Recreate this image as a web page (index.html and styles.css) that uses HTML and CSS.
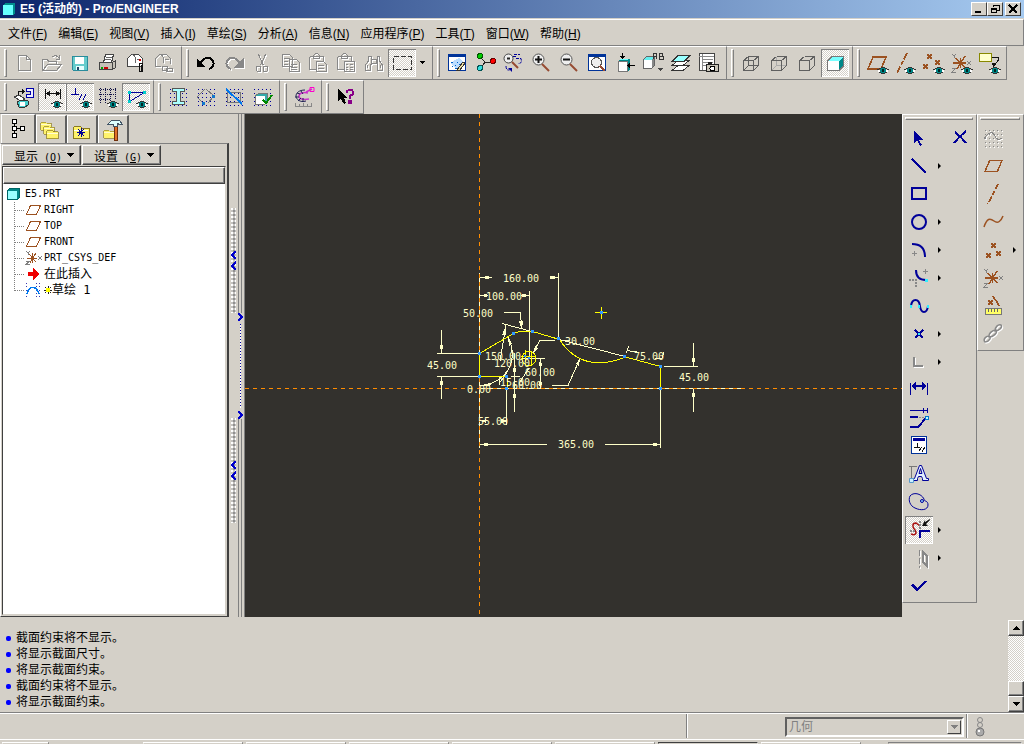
FILE: index.html
```html
<!DOCTYPE html>
<html lang="zh-CN">
<head>
    <meta charset="UTF-8">
    <meta name="viewport" content="width=device-width, initial-scale=1.0">
    <title>E5 (活动的) - Pro/ENGINEER</title>
    <link rel="stylesheet" href="styles.css">
</head>
<body>
    <!-- Shared icon parts -->
    <svg class="defs" width="0" height="0" aria-hidden="true">
        <symbol id="eye" viewBox="0 0 12 7">
            <path d="M1 3h2v2H1zM9 3h2v2H9z" fill="#fff"/>
            <path d="M0 2.500h2M2 1.500h2M4 .5h4M8 1.500h2M10 2.500h2M2 5.500h2M4 6.500h4M8 5.500h2" fill="none" stroke="#333"/>
            <path d="M3 2h6v3H3zM4 1h4v5H4z" fill="#088"/>
            <path d="M5 2h2v3H5z" fill="#022"/>
        </symbol>
        <symbol id="plane" viewBox="0 0 20 14">
            <path d="M6 1h13l-5 12H1z" fill="none" stroke="#9c5221" stroke-width="1.500"/>
        </symbol>
        <symbol id="cross" viewBox="0 0 6 6">
            <path d="M0 0l6 6M6 0L0 6" fill="none" stroke="#9c5221" stroke-width="2"/>
        </symbol>
        <symbol id="csys" viewBox="0 0 20 20">
            <path d="M2 10h13M5 5l9 10M14 3L6 16M9.500 5v10" fill="none" stroke="#9c5221" stroke-width="1.500"/>
            <path d="M1 1l2 2 2-2M3 3v2M16 8l4 4M20 8l-4 4M1 15h4l-4 4h4" fill="none" stroke="#808080"/>
        </symbol>
        <symbol id="grid" viewBox="0 0 18 18">
            <path d="M.5 1h17M.5 5h17M.5 9h17M.5 13h17M.5 17h17" fill="none" stroke="currentColor" stroke-dasharray="1 3"/>
        </symbol>
        <symbol id="folder" viewBox="0 0 18 14">
            <path d="M1 3l2-2h5l2 2h7v10H1z" fill="#fff36b" stroke="#8a7a20"/>
            <path d="M2 5h14" stroke="#fff"/>
        </symbol>
    </svg>

    <div class="window">
        <header class="titlebar">
            <svg class="app-icon" width="14" height="14" viewBox="0 0 14 14"><path d="M1 3l2-2h10v10l-2 2H1z" fill="#008c8c"/><path d="M1 3h10v10H1z" fill="#6ff"/></svg>
            <h1>E5 (活动的) - Pro/ENGINEER</h1>
            <div class="window-buttons">
                <button aria-label="最小化"><svg width="12" height="10"><path d="M2 8h6" stroke="#000" stroke-width="2"/></svg></button>
                <button aria-label="还原"><svg width="12" height="10"><path d="M4.500 3V1.500h6v5H8M4 1.500h7M2.500 4.500h5v4h-5zM2 5h6" fill="none" stroke="#000"/></svg></button>
                <button class="close" aria-label="关闭"><svg width="12" height="10"><path d="M2 1l8 8M10 1L2 9" stroke="#000" stroke-width="2"/></svg></button>
            </div>
        </header>

        <nav class="menubar">
            <a href="#">文件(<u>F</u>)</a>
            <a href="#">编辑(<u>E</u>)</a>
            <a href="#">视图(<u>V</u>)</a>
            <a href="#">插入(<u>I</u>)</a>
            <a href="#">草绘(<u>S</u>)</a>
            <a href="#">分析(<u>A</u>)</a>
            <a href="#">信息(<u>N</u>)</a>
            <a href="#">应用程序(<u>P</u>)</a>
            <a href="#">工具(<u>T</u>)</a>
            <a href="#">窗口(<u>W</u>)</a>
            <a href="#">帮助(<u>H</u>)</a>
        </nav>

        <div class="toolbar-row">
            <div class="toolbar">
                <button class="tool off" aria-label="新建"><svg><path d="M8.500 6.500h8l4 4v11h-12zM16.500 6.500v4h4"/></svg></button>
                <button class="tool off" aria-label="打开"><svg><path d="M4.500 21.500v-11h5l1 2h8v3M4.500 21.500l5-6h14l-5 6zM13.500 8.500c3-3 6-2 8 1M21.500 6v4h-4"/></svg></button>
                <button class="tool" aria-label="保存"><svg><path d="M6.500 7.500h15v14h-14l-1-1z" fill="#6cc" stroke="#2a8c9c"/><path d="M9 8h9v7H9z" fill="#fff"/><path d="M10 17h8v4h-8z" fill="#e8ffff"/><path d="M11 18h2v3h-2z" fill="#246"/></svg></button>
                <button class="tool" aria-label="打印"><svg><path d="M9.500 13.500l2-8h8l-2 8z" fill="#fff" stroke="#444"/><path d="M12 8h6M11 10h6" stroke="#666"/><path d="M5.500 13.500h13v7h-13zM18.500 13.500l3-2v7l-3 2" fill="#c6c2b8" stroke="#444"/><path d="M7 19h2" stroke="#0a0" stroke-width="2"/><path d="M10 19h4" stroke="#c00" stroke-width="2"/></svg></button>
                <button class="tool" aria-label="附件发送"><svg><path d="M5.500 17.500v-8l4-4h7l4 4v8z" fill="#fff" stroke="#444"/><path d="M10 5.500c4 1 4 4 4 8M15 10h4" stroke="#666"/><path d="M17 11h2" stroke="#c00" stroke-width="2"/><path d="M17.500 22v-8h3v7h-1v-5M17.500 20v2h3" stroke="#111"/></svg></button>
                <button class="tool off" aria-label="链接发送"><svg><path d="M5.500 17.500v-8l4-4h7l4 4v5M5.500 17.500h5M10 5.500c4 1 4 4 4 8M15 10h4M12.500 17.500h5v4h-5zM16.500 19.500h6v3h-6z"/></svg></button>
            </div>
            <div class="toolbar">
                <button class="tool" aria-label="撤消"><svg><path d="M8 15c3-7 10-8 13-3 2 4-1 7-4 8" stroke="#000" stroke-width="2"/><path d="M5 10v8h8z" fill="#000"/></svg></button>
                <button class="tool off" aria-label="重做"><svg><path d="M20 15c-3-7-10-8-13-3-2 4 1 7 4 8" stroke-width="2"/><path d="M23 10v8h-8z" class="solid"/></svg></button>
                <button class="tool off" aria-label="剪切"><svg><path d="M10.500 5.500l5 11M17.500 5.500l-5 11M8.500 17.500h4v5h-3l-1-1zM15.500 17.500h4v4l-1 1h-3z"/></svg></button>
                <button class="tool off" aria-label="复制"><svg><path d="M6.500 5.500h7l3 3v9h-10zM13.500 10.500h7l3 3v9h-10zM8 9h6M8 12h4M8 15h4M15 15h6M15 18h6M15 20h6"/></svg></button>
                <button class="tool off" aria-label="粘贴"><svg><path d="M5.500 7.500h14v5M5.500 7.500v13h7M9.500 9.500v-3l2-2h2l2 2v3zM12.500 12.500h7l3 3v7h-10zM14 16h6M14 19h6"/></svg></button>
                <button class="tool off" aria-label="选择性粘贴"><svg><path d="M5.500 7.500h14v5M5.500 7.500v13h7M9.500 9.500v-3l2-2h2l2 2v3zM12.500 12.500h10v10h-10zM14 15.500h2M18 15.500h3M14 18.500h2M18 18.500h3M14 20.500h2M18 20.500h3"/></svg></button>
                <button class="tool off" aria-label="查找"><svg><path d="M8.500 7v5l-3 4v5h5v-6h1M9 7h2v8M19.500 7v5l3 4v5h-5v-6h-1M19 7h-2v8M11.500 10.500h5v4h-5zM7 16v3M20 16v3"/></svg></button>
                <button class="tool pressed" aria-label="框选"><svg><path d="M5.500 7.500h18v13h-18z" stroke="#333" stroke-dasharray="5 2"/></svg></button>
                <button class="drop" aria-label="选择选项"><svg width="6" height="4"><path d="M0 0h6L3 3z"/></svg></button>
            </div>
            <div class="toolbar">
                <button class="tool" aria-label="重画"><svg><path d="M5.500 5.500h17v16h-17z" fill="#fff" stroke="#039"/><path d="M5 6h18" stroke="#039" stroke-width="3"/><path d="M7 14l9-5 6 5-7 7z" fill="#bdf"/><path d="M8 13h2M12 16h1M9 17h1M14 13h1M12 19h2M16 15h1" stroke="#06c"/><path d="M14 21l6-8 2 1-5 7z" fill="#efe0a0" stroke="#333"/></svg></button>
                <button class="tool" aria-label="旋转中心"><svg><path d="M9 8l5 5h8M14 13l-4 6" stroke="#222"/><circle cx="9" cy="7" r="2.500" fill="#0c0" stroke="#050"/><circle cx="22" cy="12" r="2.500" fill="#f00" stroke="#600"/><circle cx="9" cy="19" r="2.500" fill="#3dd" stroke="#055"/></svg></button>
                <button class="tool" aria-label="定向模式"><svg class="round"><circle cx="9.500" cy="9.500" r="4.500" fill="#eee" stroke="#444"/><path d="M8 9.500h3" stroke="#222" stroke-width="2"/><path d="M13 13l6 6" stroke="#964b32" stroke-width="2"/><path d="M15 5.500h6M17 9.500h5c1 4 0 5-3 5M14 7.500h3M7 17c0 4 2 5 5 3" stroke="#009" stroke-dasharray="3 1"/><path d="M9 19h4v4z" fill="#009"/></svg></button>
                <button class="tool" aria-label="放大"><svg class="round"><circle cx="11.500" cy="10.500" r="5.500" fill="#eee" stroke="#555"/><path d="M8 10.500h7M11.500 7v7" stroke="#111" stroke-width="2"/><path d="M15 15l7 7" stroke="#964b32" stroke-width="2"/></svg></button>
                <button class="tool" aria-label="缩小"><svg class="round"><circle cx="11.500" cy="10.500" r="5.500" fill="#eee" stroke="#555"/><path d="M8 10.500h7" stroke="#111" stroke-width="2"/><path d="M15 15l7 7" stroke="#964b32" stroke-width="2"/></svg></button>
                <button class="tool" aria-label="重新调整"><svg><path d="M5.500 5.500h17v16h-17z" fill="#fff" stroke="#039"/><path d="M5 6h18" stroke="#039" stroke-width="3"/><circle cx="13.500" cy="13.500" r="5" fill="#eee" stroke="#555"/><path d="M17 17l5 5" stroke="#964b32" stroke-width="2"/></svg></button>
                <button class="tool" aria-label="重定向"><svg><path d="M7 12l3-2h9v10l-2 2H7z" fill="#088"/><path d="M7 12h9v10H7z" fill="#fff" stroke="#777"/><path d="M8 11l2-1h8l-2 1z" fill="#6ff"/><path d="M11.500 4v5M18 16.500h6" stroke="#000"/><path d="M9 7h5l-2.500 3zM19 14v5l-3-2.500z" fill="#000"/></svg></button>
                <button class="tool" aria-label="保存的视图"><svg><path d="M4.500 10.500l3-3h8v9l-3 3h-8z" fill="#888" stroke="#666"/><path d="M5 11h8v8H5z" fill="#fff"/><path d="M7 8h8l-2 3H5z" fill="#6ee"/><path d="M19 19h5l-2.500 3z" fill="#444"/><path d="M14.500 10V5l1-1h1l1 1v5M14 7.500h4M20.500 4.500h3v3h-3zM20.500 7.500h4v3h-4z" stroke="#333"/></svg></button>
                <button class="tool" aria-label="层"><svg><path d="M5 21.500h11l6-5H11zM5 16.500h11l6-5H11z" fill="#fff" stroke="#333"/><path d="M5 12.500h12l6-6H11z" fill="#9ff" stroke="#333"/></svg></button>
                <button class="tool" aria-label="视图管理器"><svg><path d="M4.500 4.500h15v17h-15z" fill="#fff" stroke="#444"/><path d="M4 7.500h15M7 10.500h11M7 13.500h11M7 16.500h4M7.500 5v16" stroke="#888"/><path d="M11.500 15.500h12v7h-12z" fill="#c8c4b8" stroke="#222"/><circle cx="17.500" cy="19.500" r="2.500" fill="#fff" stroke="#000"/><path d="M13 14h4" stroke="#222" stroke-width="2"/></svg></button>
            </div>
            <div class="toolbar">
                <button class="tool" aria-label="线框"><svg class="wire"><path d="M6.500 11.500h10v10h-10zM11.500 7.500h10v9h-10zM6.500 11.500l5-4M16.500 11.500l5-4M16.500 21.500l5-5M6.500 21.500l5-5"/></svg></button>
                <button class="tool" aria-label="隐藏线"><svg class="wire"><path d="M11.500 7.500v9h10M6.500 21.500l5-5" stroke="#aaa"/><path d="M6.500 11.500h10v10h-10zM11.500 7.500h10v9M6.500 11.500l5-4M16.500 11.500l5-4M16.500 21.500l5-5"/></svg></button>
                <button class="tool" aria-label="无隐藏线"><svg class="wire"><path d="M6.500 11.500h10v10h-10zM11.500 7.500h10v9M6.500 11.500l5-4M16.500 11.500l5-4M16.500 21.500l5-5"/></svg></button>
                <button class="tool pressed" aria-label="着色"><svg><path d="M6 12l5-5h12v10l-5 5H6z" fill="#088"/><path d="M6 12l5-5h12l-5 5z" fill="#7ff"/><path d="M6 12h12v10H6z" fill="#fff"/><path d="M6.500 12v9.500H18l4.500-4.500V7.500H11z" stroke="#777"/></svg></button>
            </div>
            <div class="toolbar">
                <button class="tool" aria-label="基准平面显示"><svg><use href="#plane" x="4" y="7" width="20" height="14"/><use href="#eye" x="14" y="18" width="12" height="7"/></svg></button>
                <button class="tool" aria-label="基准轴显示"><svg><path d="M16 4L6 24" stroke="#9c5221" stroke-width="2" stroke-dasharray="7 2 4 2"/><use href="#eye" x="13" y="18" width="12" height="7"/></svg></button>
                <button class="tool" aria-label="基准点显示"><svg><use href="#cross" x="8" y="5" width="5" height="5"/><use href="#cross" x="16" y="11" width="5" height="5"/><use href="#cross" x="4" y="15" width="5" height="5"/><use href="#eye" x="14" y="18" width="12" height="7"/></svg></button>
                <button class="tool" aria-label="坐标系显示"><svg><use href="#csys" x="4" y="4" width="20" height="20"/><use href="#eye" x="14" y="18" width="12" height="7"/></svg></button>
                <button class="tool" aria-label="注释显示"><svg><path d="M4.500 4.500h12v8h-12z" fill="#ffc" stroke="#880"/><path d="M17 8.500h6v3l-4 5" stroke="#111"/><path d="M17 14l5 1-4 3z" fill="#111"/><use href="#eye" x="14" y="18" width="12" height="7"/></svg></button>
            </div>
        </div>

        <div class="toolbar-row">
            <div class="toolbar">
                <button class="tool" aria-label="草绘方向"><svg><path d="M8.500 13V8.500H13" stroke="#111"/><path d="M12 5l3 3.500-3 3.500z" fill="#111"/><path d="M16 5.500h7v9h-7v-3h4v-3h-4z" fill="#eef" stroke="#00a"/><path d="M4 14l5-2 6 4-4 2z" fill="#fff" stroke="#444"/><path d="M7 19l4-2 7 1v4l-3 2H9z" fill="#4cc" stroke="#333"/><path d="M10 19h5v4h-5z" fill="#fff"/></svg></button>
                <button class="tool pressed" aria-label="显示尺寸"><svg><path d="M7.500 6v10M22.500 6v10M8 10.500h14" stroke="#111"/><path d="M8 10.500l4-3v6zM22 10.500l-4-3v6z" fill="#111"/><use href="#eye" x="13" y="18" width="12" height="7"/></svg></button>
                <button class="tool pressed" aria-label="显示约束"><svg><path d="M5 11.500h8M9.500 5v7M13 17l3-6M17 17l3-6" stroke="#009"/><use href="#eye" x="14" y="18" width="12" height="7"/></svg></button>
                <button class="tool" aria-label="显示网格"><svg><path d="M6.500 5v15M11.500 5v15M16.500 5v15M21.500 5v12M5 6.500h18M5 11.500h18M5 16.500h12" stroke="#114" stroke-dasharray="1 1"/><use href="#eye" x="13" y="18" width="12" height="7"/></svg></button>
                <button class="tool pressed" aria-label="显示顶点"><svg><path d="M7.500 18V9.500h15l-15 9" stroke="#009"/><path d="M6 8h3v3H6zM21 8h3v3h-3zM6 17h3v3H6z" fill="#0cc"/><use href="#eye" x="14" y="18" width="12" height="7"/></svg></button>
            </div>
            <div class="toolbar">
                <button class="tool" aria-label="着色封闭环"><svg class="dots"><use href="#grid" x="5" y="5" width="18" height="18"/><path d="M8.500 5.500h12v3h-4v10h4v3h-12v-3h4v-10h-4z" fill="#aff" stroke="#555"/></svg></button>
                <button class="tool" aria-label="加亮开放端"><svg class="dots"><use href="#grid" x="5" y="5" width="18" height="18"/><path d="M14 6l8 7-6 7M5 14l8-8M5 14l5 5" stroke="#777"/><path d="M10 19h3v3h-3zM20 12h3v3h-3z" fill="#17c"/></svg></button>
                <button class="tool" aria-label="重叠几何"><svg class="dots"><use href="#grid" x="5" y="5" width="18" height="18"/><path d="M7.500 9.500h13v10h-13z" stroke="#777"/><path d="M6 6l16 15" stroke="#07e" stroke-width="2"/></svg></button>
                <button class="tool" aria-label="特征要求"><svg class="dots"><use href="#grid" x="5" y="5" width="18" height="18"/><path d="M7.500 12.500l3-2h9v9l-3 2h-9z" fill="#3aa" stroke="#777"/><path d="M8 13h9v8H8z" fill="#fff"/><path d="M15 17l3 3 6-8" stroke="#080" stroke-width="2"/></svg></button>
            </div>
            <div class="toolbar">
                <button class="tool" aria-label="曲率分析"><svg class="round"><path d="M18 10c-5-1-9 0-9 3s4 4 10 3M16 9l6-3" stroke="#c3c" stroke-width="1.500"/><path d="M15 7c-6 0-9 3-9 6s4 7 10 5M7 10l3 1M5 14h4M8 18l3-3M11 8l2 3M13 19v-4" stroke="#225"/><path d="M20 4.500h4v4h-4z" stroke="#f0c"/><path d="M5 23.500h17M5.500 20v3M9.500 21v2M13.500 20v3M17.500 21v2M21.500 20v3" stroke="#888"/></svg></button>
            </div>
            <div class="toolbar">
                <button class="tool" aria-label="上下文帮助"><svg><path d="M6 6v12l3-2 3 5 2-1-2-5h3z" fill="#000"/><path d="M15 10V8l2-1h3l1 2v2l-3 2v3M17 18h2v2h-2z" stroke="#808" stroke-width="2"/></svg></button>
            </div>
        </div>

        <main class="workspace">
            <aside class="navigator">
                <div class="tabs">
                    <button class="tab active" aria-label="模型树"><svg width="28" height="26"><path d="M8.500 3.500h4v4h-4zM8.500 10.500h4v4h-4zM8.500 17.500h4v4h-4zM16.500 10.500h4v4h-4z" fill="#fff" stroke="#000"/><path d="M10.500 8v2M10.500 15v2M13 12.500h3" stroke="#000"/></svg></button>
                    <button class="tab" aria-label="文件夹浏览器"><svg width="28" height="26"><use href="#folder" x="3" y="4" width="12" height="10"/><use href="#folder" x="6" y="8" width="12" height="10"/><use href="#folder" x="9" y="12" width="13" height="11"/></svg></button>
                    <button class="tab" aria-label="收藏夹"><svg width="28" height="26"><use href="#folder" x="4" y="8" width="18" height="14"/><path d="M13 11v9M9 15.500h8M10 12l6 7M16 12l-6 7" stroke="#009"/></svg></button>
                    <button class="tab" aria-label="连接"><svg width="28" height="26"><use href="#folder" x="4" y="12" width="12" height="10"/><path d="M15.500 9.500h3v14h-3z" fill="#e07028" stroke="#70300c"/><path d="M8.500 7.500l4-4h8l3 4h-3l-2-1v3h-4v-2z" fill="#dff" stroke="#456"/></svg></button>
                </div>
                <div class="nav-panel">
                    <div class="nav-buttons">
                        <button><span><span class="cjk">显示</span> (<u>O</u>)</span><svg width="8" height="4"><path d="M0 0h8L4 4z"/></svg></button>
                        <button><span><span class="cjk">设置</span> (<u>G</u>)</span><svg width="8" height="4"><path d="M0 0h8L4 4z"/></svg></button>
                    </div>
                    <div class="tree-box">
                        <div class="tree-head"></div>
                        <div class="tree">
                            <p><svg width="18" height="16"><path d="M1.500 4.500l2-2h10v9l-2 2h-10z" fill="#088" stroke="#066"/><path d="M2 5h9v8H2z" fill="#9ff"/></svg>E5.PRT</p>
                            <ul>
                                <li><svg width="18" height="16"><path d="M5.500 3.500h10l-4 9h-10z" class="brown"/></svg>RIGHT</li>
                                <li><svg width="18" height="16"><path d="M5.500 3.500h10l-4 9h-10z" class="brown"/></svg>TOP</li>
                                <li><svg width="18" height="16"><path d="M5.500 3.500h10l-4 9h-10z" class="brown"/></svg>FRONT</li>
                                <li><svg width="18" height="16"><path d="M2 8h10M4 4l7 8M11 3l-6 10M7.500 3v10" class="brown"/><path d="M1 1l2 2 2-2M3 3v2M13 6l4 4M17 6l-4 4M1 11.500h3l-3 3h4" class="label"/></svg>PRT_CSYS_DEF</li>
                                <li><svg width="18" height="16"><path d="M3 6h5V2l6 6-6 6v-4H3z" fill="#e00"/></svg><span class="cjk">在此插入</span></li>
                                <li><svg width="18" height="16" class="navy"><use href="#grid" x="1" y="1" width="14" height="14"/><path d="M2 12c2-9 9-9 12 0" stroke="#07e" stroke-width="1.500" fill="none"/></svg><svg width="8" height="16"><path d="M1 5l6 6M7 5l-6 6M4 4v8M0 8h8" stroke="#222"/><path d="M2 6h4v4H2z" fill="#ff0"/></svg><span class="cjk">草绘 1</span></li>
                            </ul>
                        </div>
                    </div>
                </div>
            </aside>

            <div class="splitter">
                <div class="grips">
                    <button class="grip" aria-label="折叠导航器"><svg width="5" height="19"><path d="M5 0L1 4l4 4M5 11l-4 4 4 4"/></svg></button>
                    <button class="grip" aria-label="折叠导航器下部"><svg width="5" height="19"><path d="M5 0L1 4l4 4M5 11l-4 4 4 4"/></svg></button>
                </div>
                <div class="rail">
                    <button class="expander" aria-label="展开浏览器">
                        <svg width="5" height="8"><path d="M0 0l4 4-4 4"/></svg>
                        <svg width="5" height="8"><path d="M0 0l4 4-4 4"/></svg>
                    </button>
                </div>
            </div>

            <!-- Sketch drawing area -->
            <section class="canvas">
                <svg class="sketch" role="img" aria-label="草绘">
                    <g transform="translate(-245 -114)">
                        <g class="dim">
                            <path d="M479.500 273V448M480 388.500H743"/>
                            <!-- 160.00 and 100.00 -->
                            <path d="M480 277.500h12M550 277.500h9M558.500 273v66M480 295.500h8M521 295.500h8M529.500 291v68"/>
                            <path class="tip" d="M480 277.500l9-2v4zM559 277.500l-9-2v4zM480 295.500l7-2v4zM529 295.500l-7-2v4z"/>
                            <!-- 50.00 leader -->
                            <path d="M504 312.500h16l2 15M502 323.500l30 8"/>
                            <path class="tip" d="M522 330l-3-9h4z"/>
                            <!-- left 45.00 -->
                            <path d="M441.500 330v23M437 353.500h41M437 376.500h41M441.500 377v22"/>
                            <path class="tip" d="M441.500 353l-2-8h4zM441.500 377l-2 8h4z"/>
                            <!-- right 45.00 -->
                            <path d="M664 366.500h34M693.500 343v23M693.500 388v24"/>
                            <path class="tip" d="M693.500 366l-2-8h4zM693.500 389l-2 8h4z"/>
                            <!-- 365.00 -->
                            <path d="M480 444.500h67M605 444.500h56M660.500 388v60M506.500 388v37"/>
                            <path class="tip" d="M480 444.500l8-2v4zM661 444.500l-8-2v4zM480 421l6-2v4zM507 421l-6-2v4z"/>
                            <!-- arcs and radii around the hub -->
                            <path d="M559 339.500l66 17M570 340.500h-8M555 340.500h-15l-7 12M552 385.500h16l12-27"/>
                            <path class="tip" d="M533 353l2-7 3 2zM580 358l-4 6 3 2z"/>
                            <path d="M506 325l-6 36M508 337c6 12 7 28-8 45M514.500 353v59M511 376.500h9M480 386c14-2 22-7 27-15M521 358.500h24M529 368l-9 14M540.500 361v26M499.500 376v9"/>
                            <path class="tip" d="M506 325l-4 10h4zM508 337l1 9 3-2zM514.500 376l-2-8h4zM514.500 390l-2 8h4zM481 385.500l10-3-1 4zM540.500 359l-2 7h4zM540.500 389l-2-7h4z"/>
                            <path d="M626 353l3-7M627 350l6 2M632 352l5-1M655 358h7l2-6"/>
                        </g>
                        <g class="axis">
                            <path d="M479.500 114V617M245 388.500H1400"/>
                        </g>
                        <g class="shape">
                            <path d="M479.500 353.500l34-20c7-3 12-3 19-2l27 8c17 26 40 28 66 17.500l35 9.500v22M479.500 353v23.500h27.500M507 376v12"/>
                            <circle cx="529" cy="358.500" r="7"/>
                            <path d="M521 356.500h14M525.500 350v12M531.500 352v13M595 312.500h12M601.500 307v12"/>
                        </g>
                        <path class="vertex" d="M478 352h3v3h-3zM512 332h3v3h-3zM531 330h3v3h-3zM557 337h3v3h-3zM623 355h3v3h-3zM659 365h3v3h-3zM659 387h3v3h-3zM478 375h3v3h-3zM505 375h3v3h-3zM505 387h3v3h-3zM528 357h2v2h-2zM524 355h2v2h-2zM600 311h3v3h-3z"/>
                        <g class="value">
                            <text x="503" y="282">160.00</text>
                            <text x="486" y="300">100.00</text>
                            <text x="463" y="317">50.00</text>
                            <text x="565" y="345">30.00</text>
                            <text x="427" y="369">45.00</text>
                            <text x="485" y="360">150.00</text>
                            <text x="494" y="367">120.00</text>
                            <text x="525" y="376">60.00</text>
                            <text x="500" y="386">15.00</text>
                            <text x="512" y="389">60.00</text>
                            <text x="634" y="360">75.00</text>
                            <text x="679" y="381">45.00</text>
                            <text x="467" y="393">0.00</text>
                            <text x="478" y="425">55.00</text>
                            <text x="558" y="448">365.00</text>
                        </g>
                    </g>
                </svg>
            </section>

            <div class="side-bars">
                <div class="sidebar sketcher">
                    <div class="tool-line">
                        <button class="tool" aria-label="选取"><svg><path d="M9 6v13l3-3 3 6 2-1-3-5h4z" fill="#009"/></svg></button>
                        <button class="tool second" aria-label="取消"><svg class="navy bold"><path d="M8 8c4 3 7 6 11 11M19 7c-5 4-8 7-12 12"/></svg></button>
                    </div>
                    <div class="tool-line">
                        <button class="tool" aria-label="线"><svg class="navy bold"><path d="M7 7l14 14"/></svg></button>
                        <button class="more" aria-label="更多线"></button>
                    </div>
                    <div class="tool-line">
                        <button class="tool" aria-label="矩形"><svg class="navy bold"><path d="M7 8h14v11H7z"/></svg></button>
                    </div>
                    <div class="tool-line">
                        <button class="tool" aria-label="圆"><svg class="navy bold round"><circle cx="14" cy="14" r="7"/></svg></button>
                        <button class="more" aria-label="更多圆"></button>
                    </div>
                    <div class="tool-line">
                        <button class="tool" aria-label="弧"><svg class="navy bold round"><path d="M7 8c8 0 13 4 13 13"/><path d="M7 17.500h5M9.500 15v5" stroke="#888" stroke-width="1"/></svg></button>
                        <button class="more" aria-label="更多弧"></button>
                    </div>
                    <div class="tool-line">
                        <button class="tool" aria-label="圆角"><svg class="navy bold round"><path d="M11 6c0 7 4 10 10 10"/><path d="M4 16h9M11 15v8" stroke="#888" stroke-dasharray="2 1"/><path d="M18 7.500h5M20.500 5v5" stroke="#888" stroke-width="1"/><path d="M20 15h3v3h-3z" fill="#3ef" stroke="none"/></svg></button>
                        <button class="more" aria-label="更多圆角"></button>
                    </div>
                    <div class="tool-line">
                        <button class="tool" aria-label="样条"><svg class="navy bold round"><path d="M6 14c1-8 8-8 9 0s7 8 8 0"/><path d="M5 13h2v3H5zM13 13h2v3h-2zM22 13h2v3h-2z" fill="#3ef" stroke="none"/></svg></button>
                    </div>
                    <div class="tool-line">
                        <button class="tool" aria-label="点"><svg class="navy bold"><path d="M10 10l8 8M18 10l-8 8"/><path d="M13 13h2v2h-2z" fill="#3ef" stroke="none"/></svg></button>
                        <button class="more" aria-label="更多点"></button>
                    </div>
                    <div class="tool-line">
                        <button class="tool off" aria-label="使用边"><svg><path d="M9 9v9h9" stroke-width="2"/></svg></button>
                        <button class="more" aria-label="更多边"></button>
                    </div>
                    <div class="tool-line">
                        <button class="tool" aria-label="尺寸"><svg class="navy"><path d="M5.500 7v12M22.500 7v12" /><path d="M7 10h14" stroke-width="2"/><path d="M6 10l5-4v8zM22 10l-5-4v8z" fill="#009" stroke="none"/></svg></button>
                    </div>
                    <div class="tool-line">
                        <button class="tool" aria-label="修改"><svg class="navy"><path d="M5 6.500h18M18.500 4v5M22.500 4v5"/><path d="M5 13h8M5 23h8l8-9" stroke-width="2"/><path d="M14 13h6" stroke="#888" stroke-dasharray="2 1"/><path d="M20 12h3v3h-3z" fill="#bff" stroke="#07c"/></svg></button>
                    </div>
                    <div class="tool-line">
                        <button class="tool" aria-label="约束"><svg><path d="M6.500 4.500h15v17h-15z" fill="#fff" stroke="#039"/><path d="M8 7.500h12" stroke="#009" stroke-width="3"/><path d="M9 15.500h6M12.500 11v5M14 19l3-4M17 20l3-5" stroke="#111"/></svg></button>
                    </div>
                    <div class="tool-line">
                        <button class="tool" aria-label="文本"><svg class="navy round"><path d="M8.500 20.500v-2h1l5-13h2l5 13h2v2h-6v-2l-1-2h-3l-1 2v2zM14 13.500h3l-1.500-5z" fill="#e4f0ff"/><path d="M4 6.500h8M6.500 7v12" stroke="#777"/><path d="M4.500 18.500h4v4h-4z" fill="#cef" stroke="#59c"/></svg></button>
                    </div>
                    <div class="tool-line">
                        <button class="tool" aria-label="调色板"><svg class="navy round"><path d="M5 8c3-4 11-3 14 3 0 3 4 1 4 6 0 5-7 6-13 3-5-2-7-8-5-12z"/><circle cx="17" cy="13" r="1.500" fill="#9df"/></svg></button>
                    </div>
                    <div class="tool-line">
                        <button class="tool pressed" aria-label="修剪"><svg class="round"><path d="M6 18c5 2 6-1 4-4-3-3-3-7 1-7l4 3" stroke="#a11" stroke-width="1.500"/><path d="M15 22v-7h10" stroke="#009" stroke-width="2"/><path d="M5 15h6M15 5v8" stroke="#888" stroke-width="2" stroke-dasharray="2 1"/><path d="M25 3l-5 3v-2l-3 6h6l-2-2 4-4z" fill="#111"/></svg></button>
                        <button class="more" aria-label="更多修剪"></button>
                    </div>
                    <div class="tool-line">
                        <button class="tool off" aria-label="镜像"><svg><path d="M14.500 6v18" stroke-dasharray="6 2"/><path d="M18 8v10l4 4V12z" stroke-width="2"/></svg></button>
                        <button class="more" aria-label="更多镜像"></button>
                    </div>
                    <div class="tool-line">
                        <button class="tool" aria-label="完成"><svg><path d="M5 13l3-1 4 4 7-7h3L12 20z" fill="#009"/></svg></button>
                    </div>
                </div>
                <div class="sidebar datum">
                    <div class="tool-line"><button class="tool off" aria-label="草绘工具"><svg><use href="#grid" x="4" y="5" width="18" height="18"/><path d="M4 15c5-8 9-8 11-3s4 4 6 2"/></svg></button></div>
                    <div class="tool-line"><button class="tool" aria-label="基准平面"><svg><use href="#plane" x="4" y="7" width="19" height="14"/></svg></button></div>
                    <div class="tool-line"><button class="tool" aria-label="基准轴"><svg><path d="M18 4L8 24" stroke="#9c5221" stroke-width="2" stroke-dasharray="6 2 4 2"/></svg></button></div>
                    <div class="tool-line"><button class="tool" aria-label="基准曲线"><svg class="round"><path d="M4 19c3-9 6-9 10-6s7 0 9-5" stroke="#9c5221" stroke-width="1.500"/></svg></button></div>
                    <div class="tool-line"><button class="tool" aria-label="基准点"><svg><use href="#cross" x="11" y="7" width="5" height="5"/><use href="#cross" x="16" y="15" width="5" height="5"/><use href="#cross" x="6" y="17" width="5" height="5"/></svg></button><button class="more" aria-label="更多基准点"></button></div>
                    <div class="tool-line"><button class="tool" aria-label="坐标系"><svg><use href="#csys" x="3" y="4" width="20" height="20"/></svg></button></div>
                    <div class="tool-line"><button class="tool" aria-label="分析"><svg><use href="#cross" x="8" y="8" width="5" height="5"/><path d="M13 4l2 4M16 8l3 6" stroke="#9c5221" stroke-width="2"/><path d="M5.500 16.500h16v6h-16z" fill="#ff6" stroke="#777"/><path d="M8.500 17v3M11.500 17v3M14.500 17v3M17.500 17v3" stroke="#666"/></svg></button></div>
                    <div class="tool-line"><button class="tool off" aria-label="参照"><svg class="round"><path d="M5 22c-2-2 0-6 4-6 3 1 0 6-4 6zM9 17c-1-3 3-7 7-7 2 3-3 7-7 7zM15 11c0-4 3-7 6-6 2 2-2 6-6 6z" stroke-width="1.500"/></svg></button></div>
                </div>
            </div>
        </main>

        <section class="messages">
            <ul>
                <li>截面约束将不显示。</li>
                <li>将显示截面尺寸。</li>
                <li>将显示截面约束。</li>
                <li>截面约束将不显示。</li>
                <li>将显示截面约束。</li>
            </ul>
            <div class="scrollbar">
                <button aria-label="向上滚动"><svg width="7" height="4"><path d="M0 4h7L3.500 0z"/></svg></button>
                <div class="thumb"></div>
                <button aria-label="向下滚动"><svg width="7" height="4"><path d="M0 0h7L3.500 4z"/></svg></button>
            </div>
        </section>

        <footer class="statusbar">
            <div class="status-text"></div>
            <div class="status-filter">
                <div class="select-wrap">
                    <select aria-label="选择过滤器" disabled><option>几何</option></select>
                    <svg width="14" height="14"><path d="M3 4h7L6.500 8z"/></svg>
                </div>
            </div>
            <div class="status-light">
                <svg width="12" height="22"><circle cx="5" cy="3" r="2.500" fill="none" stroke="#888"/><circle cx="5" cy="8" r="2.500" fill="none" stroke="#888"/><circle cx="5" cy="15" r="4" fill="#aaa" stroke="#777"/><path d="M3 13h2v2H3z" fill="#fff"/></svg>
            </div>
        </footer>

        <div class="taskbar">
            <div class="task start"></div>
            <div class="task"></div>
            <div class="task"></div>
            <div class="task"></div>
            <div class="task"></div>
            <div class="task"></div>
            <div class="task current"></div>
            <div class="task"></div>
            <div class="tray"></div>
        </div>
    </div>
</body>
</html>
```
FILE: styles.css
```css
*,
*::before {
    box-sizing: border-box;
}

body {
    margin: 0;
    background-color: #d4d0c8;
    color: #000;
    font-family: "Liberation Sans", "Noto Sans CJK SC", sans-serif;
    font-size: 12px;
}

button {
    padding: 0;
    border: none;
    border-radius: 0;
    background: none;
    color: inherit;
    font: inherit;
}

svg {
    display: block;
    flex: none;
    shape-rendering: crispEdges;
}

.defs {
    position: absolute;
}

.window {
    display: flex;
    flex-direction: column;
    height: 100vh;
    min-height: 740px;
    overflow: hidden;
}

/* Title bar */
.titlebar {
    display: flex;
    align-items: center;
    flex: none;
    height: 18px;
    padding: 0 3px 0 2px;
    gap: 4px;
    background: linear-gradient(to right, #0a246a, #a6caf0);
    color: #fff;
}

.titlebar h1 {
    flex: 1;
    margin: 0;
    font-size: 12px;
    line-height: 18px;
}

.window-buttons {
    display: flex;
}

.window-buttons button {
    width: 16px;
    height: 14px;
    padding: 1px;
    background-color: #d4d0c8;
    border: 1px solid;
    border-color: #fff #404040 #404040 #fff;
}

.window-buttons .close {
    margin-left: 2px;
}

/* Menu */
.menubar {
    display: flex;
    align-items: center;
    flex: none;
    height: 27px;
    margin-top: 1px;
    padding: 0 8px 1px;
    gap: 11px;
    border-top: 1px solid #fff;
    border-bottom: 1px solid #808080;
    border-right: 1px solid #808080;
}

.menubar a {
    color: #000;
    text-decoration: none;
    white-space: nowrap;
}

/* Toolbars */
.toolbar-row {
    display: flex;
    flex: none;
    height: 34px;
}

.toolbar {
    display: flex;
    align-items: center;
    padding-right: 3px;
    border-top: 1px solid #fff;
    border-right: 1px solid #808080;
    border-bottom: 1px solid #808080;
}

.toolbar::before {
    content: "";
    width: 3px;
    height: 28px;
    margin: 0 3px 0 4px;
    border: 1px solid;
    border-color: #fff #808080 #808080 #fff;
}

.tool {
    flex: none;
    width: 28px;
    height: 28px;
}

.tool svg {
    width: 28px;
    height: 28px;
    fill: none;
}

.tool.pressed {
    background: repeating-conic-gradient(#fff 0 25%, #d4d0c8 0 50%) 0 0 / 2px 2px;
    box-shadow: inset 1px 1px #808080, inset -1px -1px #fff;
}

.tool.off svg {
    color: #888;
    stroke: #888;
    filter: drop-shadow(1px 1px 0 #fff);
}

.tool.off .solid {
    fill: #888;
}

.tool .wire {
    stroke: #606060;
}

.drop {
    width: 13px;
    height: 28px;
    padding-left: 3px;
}

.navy,
.dots {
    color: #009;
}

.tool .navy {
    stroke: #009;
}

.tool .bold {
    stroke-width: 2;
}

.tool .round {
    shape-rendering: auto;
}

/* Work area */
.workspace {
    display: flex;
    flex: 1;
    min-height: 490px;
}

.navigator {
    display: flex;
    flex-direction: column;
    width: 229px;
}

.tabs {
    display: flex;
    align-items: flex-end;
    height: 29px;
    padding-left: 1px;
}

.tab {
    width: 31px;
    height: 28px;
    border-top: 1px solid #fff;
    border-left: 1px solid #fff;
    border-right: 2px solid #606060;
}

.tab.active {
    width: 35px;
    height: 29px;
}

.tab.active svg {
    margin: auto;
}

.nav-panel {
    display: flex;
    flex-direction: column;
    flex: 1;
    padding: 1px;
    border: 1px solid;
    border-color: #808080 #404040 #404040 #fff;
    border-right-width: 2px;
}

.nav-buttons {
    display: flex;
    height: 20px;
    gap: 1px;
}

.nav-buttons button {
    display: flex;
    align-items: center;
    justify-content: flex-end;
    width: 79px;
    gap: 4px;
    padding-right: 6px;
    border: 1px solid;
    border-color: #fff #404040 #404040 #fff;
    box-shadow: inset -1px -1px #808080;
    font-family: "DejaVu Sans Mono", "Noto Sans CJK SC", monospace;
    font-size: 10px;
    white-space: nowrap;
}

.cjk {
    font-size: 12px;
    white-space: pre;
}

.tree-box {
    display: flex;
    flex-direction: column;
    flex: 1;
    margin-top: 1px;
    border: 1px solid;
    border-color: #404040 #d4d0c8 #d4d0c8 #404040;
    background-color: #fff;
}

.tree-head {
    height: 17px;
    border: 1px solid;
    border-color: #fff #404040 #404040 #fff;
    box-shadow: inset -1px -1px #808080;
    background-color: #d4d0c8;
}

.tree {
    padding: 2px 0 0 3px;
    font-family: "DejaVu Sans Mono", "Noto Sans CJK SC", monospace;
    font-size: 10px;
    line-height: 16px;
}

.tree p {
    display: flex;
    margin: 0;
}

.tree svg:first-child {
    margin-right: 1px;
}

.tree ul {
    margin: 0 0 0 8px;
    padding: 0;
    list-style: none;
    background: repeating-linear-gradient(#808080 0 1px, transparent 1px 2px) 0 0 / 1px 88px no-repeat;
}

.tree li {
    display: flex;
}

.tree li::before {
    content: "";
    width: 10px;
    height: 9px;
    margin-right: 1px;
    border-bottom: 1px dotted #808080;
}

.tree .brown {
    fill: none;
    stroke: #9c5221;
}

.tree .label {
    fill: none;
    stroke: #808080;
}

/* Splitter */
.splitter {
    display: flex;
    width: 16px;
    padding-left: 2px;
    border-right: 1px solid #808080;
}

.splitter svg {
    fill: none;
    stroke: #00c;
    stroke-width: 2;
}

.grips {
    display: flex;
    flex-direction: column;
    justify-content: center;
    gap: 105px;
    width: 5px;
    margin-right: 2px;
}

.grip {
    display: flex;
    align-items: center;
    height: 105px;
    background:
        radial-gradient(circle at 1px 1px, #fff 1px, transparent 1px) 0 0 / 4px 4px,
        radial-gradient(circle at 3px 3px, #909090 1px, transparent 1px) 0 0 / 4px 4px,
        #c4c2be;
}

.rail {
    display: flex;
    align-items: center;
    width: 4px;
    border-left: 1px solid #808080;
    border-right: 1px solid #808080;
}

.expander {
    display: flex;
    flex: none;
    flex-direction: column;
    justify-content: space-between;
    width: 5px;
    height: 106px;
    margin: 0 -2px 0 -1px;
    background: repeating-linear-gradient(#009 0 1px, #fff 1px 3px) 2px 11px / 1px 84px no-repeat, #d4d0c8;
}

/* Sketch */
.canvas {
    flex: 1;
    min-width: 0;
    background-color: #33312d;
}

.sketch {
    width: 100%;
    height: 100%;
    fill: none;
}

.dim {
    stroke: #ffffc8;
}

.dim .tip {
    fill: #ffffc8;
    stroke: none;
}

.axis {
    stroke: #ff8c00;
    stroke-dasharray: 4 4;
}

.shape {
    stroke: #ff0;
}

.vertex {
    fill: #39f;
}

.value {
    fill: #ffffc8;
    font-family: "DejaVu Sans Mono", monospace;
    font-size: 10px;
}

/* Right-hand tool columns */
.side-bars {
    display: flex;
    align-items: flex-start;
}

.sidebar {
    padding: 2px 3px 2px 2px;
    border: 1px solid;
    border-color: #fff #808080 #808080 #fff;
}

.sidebar::before {
    content: "";
    display: block;
    height: 3px;
    margin-bottom: 4px;
    border: 1px solid;
    border-color: #fff #808080 #808080 #fff;
}

.sketcher {
    width: 75px;
}

.datum {
    width: 47px;
}

.tool-line {
    display: flex;
    height: 28px;
}

.tool-line .second {
    margin-left: 14px;
}

.more {
    width: 12px;
    padding-left: 5px;
}

.more::before {
    content: "";
    display: block;
    width: 3px;
    border-left: 3px solid #000;
    border-top: 3px solid transparent;
    border-bottom: 3px solid transparent;
}

/* Message log */
.messages {
    display: flex;
    flex: none;
    height: 96px;
    border-bottom: 1px solid #808080;
}

.messages ul {
    flex: 1;
    margin: 0;
    padding: 13px 0 0 6px;
    list-style: none;
    line-height: 16px;
}

.messages li {
    display: flex;
    align-items: center;
    gap: 5px;
}

.messages li::before {
    content: "";
    width: 5px;
    height: 5px;
    border-radius: 2px;
    background-color: #00f;
}

.scrollbar {
    display: flex;
    flex-direction: column;
    width: 16px;
    margin-top: 3px;
    background: repeating-conic-gradient(#fff 0 25%, #d4d0c8 0 50%) 0 0 / 2px 2px;
}

.scrollbar button,
.thumb {
    display: flex;
    align-items: center;
    justify-content: center;
    height: 16px;
    border: 1px solid;
    border-color: #fff #404040 #404040 #fff;
    box-shadow: inset -1px -1px #808080;
    background-color: #d4d0c8;
}

.thumb {
    height: 15px;
    margin-top: auto;
}

/* Status bar */
.statusbar {
    display: flex;
    flex: none;
    height: 27px;
    border-top: 1px solid #fff;
    border-bottom: 1px solid #fff;
}

.status-text {
    flex: 1;
    margin-bottom: 1px;
    border-right: 1px solid #808080;
}

.status-filter {
    width: 280px;
    margin-bottom: 1px;
    padding: 3px 2px 0 97px;
    border-left: 1px solid #fff;
    border-right: 1px solid #808080;
}

.status-light {
    width: 57px;
    margin-bottom: 1px;
    padding: 3px 0 0 7px;
    border-left: 1px solid #fff;
}

.status-light svg {
    shape-rendering: auto;
}

.select-wrap {
    display: flex;
    align-items: center;
    height: 20px;
    padding-right: 1px;
    border: 2px solid;
    border-color: #606060 #fff #fff #606060;
}

.select-wrap select {
    flex: 1;
    height: 16px;
    padding: 0 2px;
    border: none;
    appearance: none;
    background: none;
    color: #808080;
    font: inherit;
    line-height: 16px;
    opacity: 1;
}

.select-wrap svg {
    fill: #808080;
    border: 1px solid;
    border-color: #fff #404040 #404040 #fff;
}

/* Top edge of the system taskbar */
.taskbar {
    display: flex;
    flex: none;
    height: 4px;
    padding: 2px 2px 0;
    gap: 3px;
}

.task {
    width: 100px;
    border: 1px solid;
    border-color: #fff #404040 transparent #fff;
}

.task.start {
    width: 47px;
    margin-right: 91px;
}

.task.current {
    border-color: #404040 #fff transparent #404040;
}

.tray {
    flex: 1;
    margin-left: 24px;
    border: 1px solid;
    border-color: #808080 #fff transparent #808080;
}
```
